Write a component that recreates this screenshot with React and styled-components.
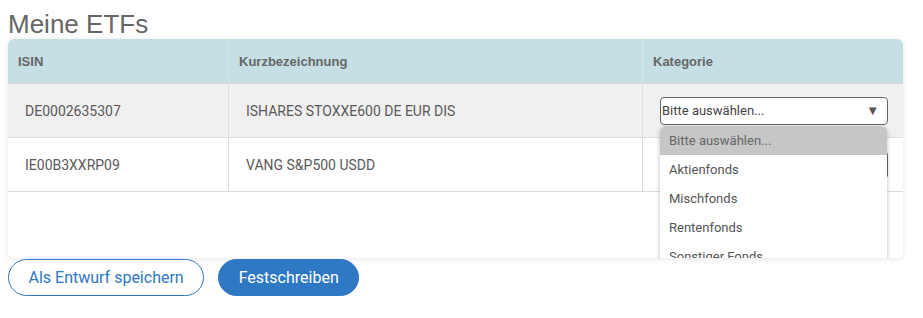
import React from "react";
import styled, { createGlobalStyle } from "styled-components";

const GlobalStyle = createGlobalStyle`
  body {
    margin: 0;
    background: #fff;
    font-family: Roboto, "Liberation Sans", sans-serif;
  }
`;

const Page = styled.div`
  padding: 10px 8px 0 8px;
`;

const Title = styled.h1`
  margin: 0;
  font-family: "Liberation Sans", Arial, sans-serif;
  font-weight: 400;
  font-size: 26px;
  line-height: 29px;
  color: #666;
`;

const Card = styled.div`
  width: 895px;
  height: 219px;
  border-radius: 6px;
  overflow: hidden;
  background: #fff;
  box-shadow: 0 1px 6px rgba(0, 0, 0, 0.1);
`;

const Row = styled.div`
  position: relative;
  z-index: ${(p) => p.layer || 0};
  display: grid;
  grid-template-columns: 220px 414px 1fr;
  height: ${(p) => (p.head ? "44px" : "53px")};
  background: ${(p) => (p.head ? "#c5dfe5" : p.shaded ? "#f0f0f0" : "#fff")};
  border-bottom: 1px solid #dcdcdc;
`;

const HeadCell = styled.div`
  display: flex;
  align-items: center;
  padding-left: 10px;
  font-family: "Liberation Sans", Arial, sans-serif;
  font-weight: 700;
  font-size: 13px;
  color: #666;
  border-left: ${(p) => (p.first ? "none" : "1px solid #d6e7eb")};
`;

const Cell = styled.div`
  display: flex;
  align-items: center;
  padding-left: 17px;
  font-size: 14px;
  color: #5a5a5a;
  border-left: ${(p) => (p.first ? "none" : "1px solid #dcdcdc")};
`;

const Select = styled.div`
  position: relative;
  display: flex;
  align-items: center;
  justify-content: space-between;
  box-sizing: border-box;
  width: 228px;
  height: 28px;
  padding: 0 8px 0 1px;
  border: 1px solid #666;
  border-radius: 4px;
  background: #fff;
  font-size: 13px;
  color: #444;
`;

const Arrow = styled.span`
  font-size: 13px;
  color: #555;
`;

const Menu = styled.div`
  position: absolute;
  top: 28px;
  left: -1px;
  width: 227px;
  z-index: 5;
  background: #fff;
  border-radius: 6px 6px 0 0;
  box-shadow: 0 1px 5px rgba(0, 0, 0, 0.25);
  overflow: hidden;
`;

const Option = styled.div`
  height: 29px;
  display: flex;
  align-items: center;
  padding-left: 9px;
  font-size: 13px;
  color: ${(p) => (p.active ? "#666" : "#555")};
  background: ${(p) => (p.active ? "#c6c6c6" : "#fff")};
`;

const Actions = styled.div`
  display: flex;
  gap: 14px;
  margin-top: 1px;
`;

const Button = styled.button`
  height: 37px;
  padding: 0 19.5px;
  border-radius: 19px;
  border: 1px solid #2f78c4;
  font-family: Roboto, sans-serif;
  font-size: 16px;
  cursor: pointer;
  color: ${(p) => (p.primary ? "#fff" : "#2f78c4")};
  background: ${(p) => (p.primary ? "#2f78c4" : "#fff")};
`;

const etfs = [
  { isin: "DE0002635307", name: "ISHARES STOXXE600 DE EUR DIS", open: true },
  { isin: "IE00B3XXRP09", name: "VANG S&P500 USDD", open: false },
];

const options = [
  "Bitte auswählen...",
  "Aktienfonds",
  "Mischfonds",
  "Rentenfonds",
  "Sonstiger Fonds",
];

function CategorySelect({ open }) {
  return (
    <Select>
      <span>Bitte auswählen...</span>
      <Arrow>▼</Arrow>
      {open && (
        <Menu>
          {options.map((o, i) => (
            <Option key={o} active={i === 0}>
              {o}
            </Option>
          ))}
        </Menu>
      )}
    </Select>
  );
}

export default function App() {
  return (
    <Page>
      <GlobalStyle />
      <Title>Meine ETFs</Title>
      <Card>
        <Row head>
          <HeadCell first>ISIN</HeadCell>
          <HeadCell>Kurzbezeichnung</HeadCell>
          <HeadCell>Kategorie</HeadCell>
        </Row>
        {etfs.map((etf, index) => (
          <Row key={etf.isin} shaded={index === 0} layer={etfs.length - index}>
            <Cell first>{etf.isin}</Cell>
            <Cell>{etf.name}</Cell>
            <Cell>
              <CategorySelect open={etf.open} />
            </Cell>
          </Row>
        ))}
      </Card>
      <Actions>
        <Button>Als Entwurf speichern</Button>
        <Button primary>Festschreiben</Button>
      </Actions>
    </Page>
  );
}
